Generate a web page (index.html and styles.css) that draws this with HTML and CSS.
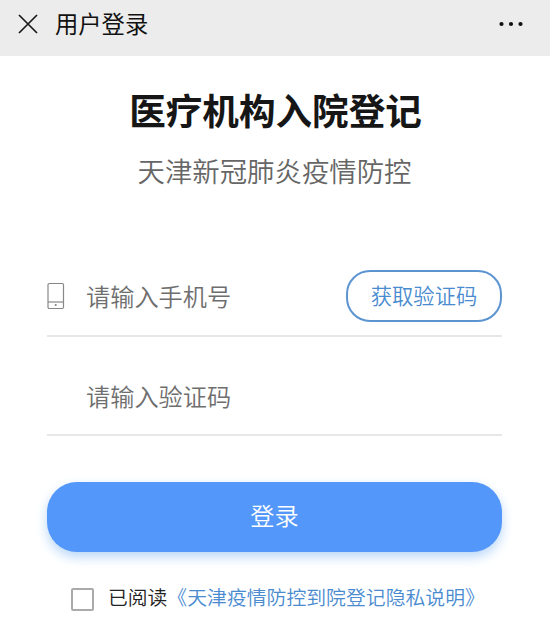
FILE: index.html
```html
<!DOCTYPE html>
<html lang="zh-CN">
<head>
<meta charset="utf-8">
<title>用户登录</title>
<link rel="stylesheet" href="styles.css">
</head>
<body>
<header class="bar">
  <svg class="close" viewBox="0 0 20 20"><path d="M1 1L19 19M19 1L1 19"/></svg>
  <span class="bar-title">用户登录</span>
  <svg class="more" viewBox="0 0 26 6"><circle cx="3.500" cy="3" r="2.100"/><circle cx="13" cy="3" r="2.100"/><circle cx="22.500" cy="3" r="2.100"/></svg>
</header>
<main class="page">
  <h1 class="title">医疗机构入院登记</h1>
  <p class="subtitle">天津新冠肺炎疫情防控</p>
  <form class="form">
    <div class="field">
      <svg class="phone" viewBox="0 0 18 28"><rect x="1" y="1.500" width="15.500" height="25" rx="1.200"/><path d="M1 20H16.500"/><circle class="key" cx="8.700" cy="23" r="1.100"/></svg>
      <span class="hint">请输入手机号</span>
      <button class="code" type="button">获取验证码</button>
    </div>
    <div class="field second"><span class="hint">请输入验证码</span></div>
    <button class="login" type="button">登录</button>
    <div class="agree"><span class="box"></span><span class="read">已阅读</span><span class="link">《天津疫情防控到院登记隐私说明》</span></div>
  </form>
</main>
</body>
</html>
```
FILE: styles.css
```css
* { box-sizing: border-box; }
body { margin: 0; background: #fff; font-family: "Noto Sans CJK SC", sans-serif; font-weight: 350; }
button { font-family: inherit; font-weight: inherit; padding: 0; }
.bar { height: 56px; background: #ececec; display: flex; align-items: center; padding: 0 26px 9px 18px; }
.close { width: 20px; height: 20px; fill: none; stroke: #1a1a1a; stroke-width: 1.7; }
.bar-title { margin: -2px 0 0 17px; font-size: 23.3px; font-weight: 400; color: #111; line-height: 46px; }
.more { width: 26px; height: 6px; margin-left: auto; fill: #111; }
.page { padding: 29px 48px 0 47px; }
.title { margin: 0 -1px 0 1px; font-size: 36.6px; line-height: 49px; text-align: center; color: #161616; font-weight: 700; }
.subtitle { margin: 16px 0 0; font-size: 27.4px; line-height: 40px; text-align: center; color: #666; }
.form { margin-top: 70px; }
.field { height: 77px; border-bottom: 2px solid #e7e7e7; display: flex; align-items: center; padding-bottom: 4px; }
.phone { width: 18px; height: 28px; fill: none; stroke: #888; stroke-width: 1.2; }
.key { fill: #888; stroke: none; }
.hint { margin-left: 21px; font-size: 24.2px; color: #6e6e6e; }
.code { margin-left: auto; width: 156px; height: 52px; border: 2px solid #5c94d2; border-radius: 24px; background: #fff; color: #4a8bd0; font-size: 21.3px; padding-bottom: 3px; }
.second { height: 99px; padding-top: 23px; }
.second .hint { margin-left: 39px; }
.login { display: block; width: 100%; height: 70px; margin-top: 46px; border: 0; border-radius: 30px; background: #5297f9; color: #fff; font-size: 24.2px; padding-bottom: 6px; box-shadow: 0 5px 12px #b9d7f8; }
.agree { display: flex; align-items: center; height: 30px; margin-top: 32px; padding-left: 24px; white-space: nowrap; font-size: 19.8px; }
.box { width: 23px; height: 23px; border: 2px solid #aaa; border-radius: 2px; }
.read { margin: -6px 0 0 14px; color: #222; }
.link { margin-top: -6px; color: #4a8bd0; font-size: 19.85px; }
```
